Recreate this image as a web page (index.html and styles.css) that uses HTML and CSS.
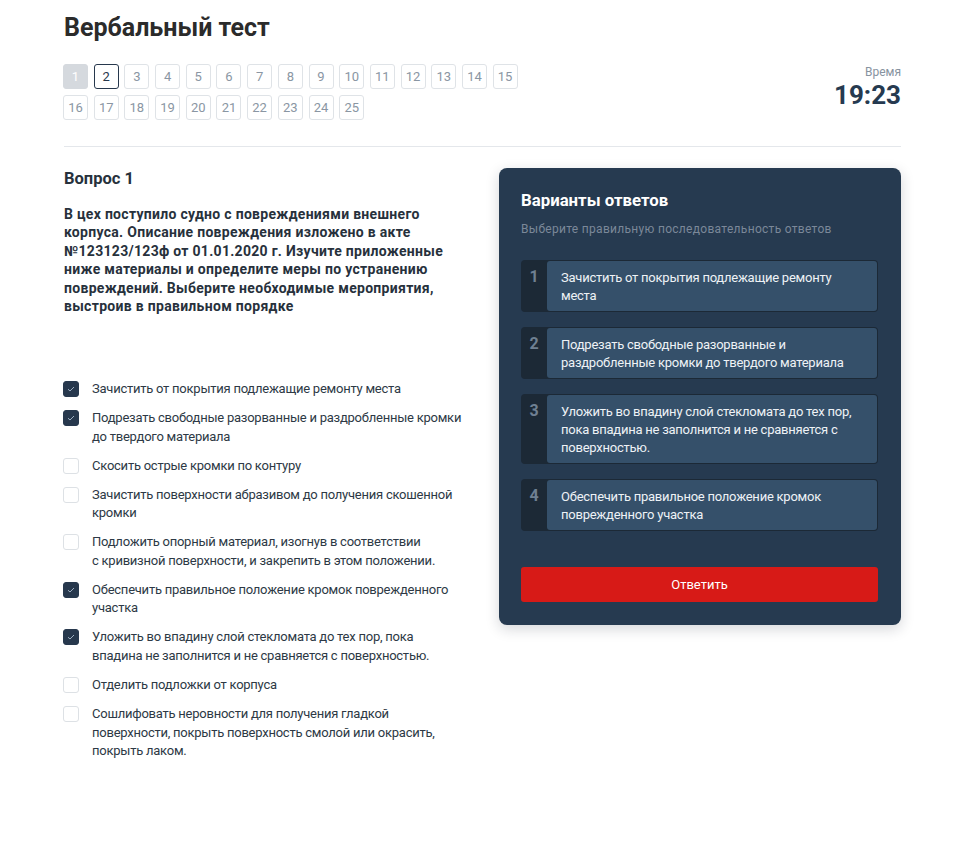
FILE: index.html
```html
<!DOCTYPE html>
<html lang="ru">
<head>
<meta charset="utf-8">
<title>Вербальный тест</title>
<link rel="stylesheet" href="styles.css">
</head>
<body>
<div class="page">
  <header class="header">
    <h1 class="title">Вербальный тест</h1>
    <div class="header-row">
      <div class="pager">
        <span class="pg pg-done">1</span>
        <span class="pg pg-current">2</span>
        <span class="pg">3</span><span class="pg">4</span><span class="pg">5</span><span class="pg">6</span><span class="pg">7</span><span class="pg">8</span><span class="pg">9</span><span class="pg">10</span><span class="pg">11</span><span class="pg">12</span><span class="pg">13</span><span class="pg">14</span><span class="pg">15</span><span class="pg">16</span><span class="pg">17</span><span class="pg">18</span><span class="pg">19</span><span class="pg">20</span><span class="pg">21</span><span class="pg">22</span><span class="pg">23</span><span class="pg">24</span><span class="pg">25</span>
      </div>
      <div class="timer">
        <div class="timer-label">Время</div>
        <div class="timer-value">19:23</div>
      </div>
    </div>
  </header>

  <main class="content">
    <section class="question">
      <h2 class="q-title">Вопрос 1</h2>
      <p class="q-text">В цех поступило судно с повреждениями внешнего корпуса. Описание повреждения изложено в акте №123123/123ф от 01.01.2020 г. Изучите приложенные ниже материалы и определите меры по устранению повреждений. Выберите необходимые мероприятия, выстроив в правильном порядке</p>
      <ul class="options">
        <li class="option"><span class="cb cb-on"><svg viewBox="0 0 16 16" width="16" height="16"><path d="M5 8.2 L7 10 L11 6" fill="none" stroke="#9fb0c2" stroke-width="1"/></svg></span><span class="opt-text">Зачистить от покрытия подлежащие ремонту места</span></li>
        <li class="option"><span class="cb cb-on"><svg viewBox="0 0 16 16" width="16" height="16"><path d="M5 8.2 L7 10 L11 6" fill="none" stroke="#9fb0c2" stroke-width="1"/></svg></span><span class="opt-text">Подрезать свободные разорванные и раздробленные кромки до твердого материала</span></li>
        <li class="option"><span class="cb"></span><span class="opt-text">Скосить острые кромки по контуру</span></li>
        <li class="option"><span class="cb"></span><span class="opt-text">Зачистить поверхности абразивом до получения скошенной кромки</span></li>
        <li class="option"><span class="cb"></span><span class="opt-text">Подложить опорный материал, изогнув в соответствии с&nbsp;кривизной поверхности, и закрепить в этом положении.</span></li>
        <li class="option"><span class="cb cb-on"><svg viewBox="0 0 16 16" width="16" height="16"><path d="M5 8.2 L7 10 L11 6" fill="none" stroke="#9fb0c2" stroke-width="1"/></svg></span><span class="opt-text">Обеспечить правильное положение кромок поврежденного участка</span></li>
        <li class="option"><span class="cb cb-on"><svg viewBox="0 0 16 16" width="16" height="16"><path d="M5 8.2 L7 10 L11 6" fill="none" stroke="#9fb0c2" stroke-width="1"/></svg></span><span class="opt-text">Уложить во впадину слой стекломата до тех пор, пока впадина не заполнится и не сравняется с поверхностью.</span></li>
        <li class="option"><span class="cb"></span><span class="opt-text">Отделить подложки от корпуса</span></li>
        <li class="option"><span class="cb"></span><span class="opt-text">Сошлифовать неровности для получения гладкой поверхности, покрыть поверхность смолой или окрасить, покрыть лаком.</span></li>
      </ul>
    </section>

    <aside class="panel">
      <h3 class="panel-title">Варианты ответов</h3>
      <p class="panel-sub">Выберите правильную последовательность ответов</p>
      <ol class="answers">
        <li class="answer"><span class="ans-num">1</span><span class="ans-text">Зачистить от покрытия подлежащие ремонту места</span></li>
        <li class="answer"><span class="ans-num">2</span><span class="ans-text">Подрезать свободные разорванные и раздробленные кромки до твердого материала</span></li>
        <li class="answer"><span class="ans-num">3</span><span class="ans-text">Уложить во впадину слой стекломата до тех пор, пока впадина не заполнится и не сравняется с поверхностью.</span></li>
        <li class="answer"><span class="ans-num">4</span><span class="ans-text">Обеспечить правильное положение кромок поврежденного участка</span></li>
      </ol>
      <button class="submit" type="button">Ответить</button>
    </aside>
  </main>
</div>
</body>
</html>
```

FILE: styles.css
```css
* { box-sizing: border-box; }

body {
  margin: 0;
  background: #ffffff;
  font-family: Roboto, "Liberation Sans", Arial, sans-serif;
  color: #27313c;
}

.page {
  width: 837px;
  margin-left: 64px;
}

.header {
  padding-bottom: 26px;
  border-bottom: 1px solid #e4e7eb;
}

.title {
  margin: 12px 0 0;
  font-size: 25px;
  line-height: 32px;
  font-weight: 700;
  color: #2b2b2b;
}

.header-row {
  margin-top: 20px;
  display: flex;
  justify-content: space-between;
  align-items: flex-start;
}

.pager {
  width: 460px;
  margin-left: -1px;
  display: flex;
  flex-wrap: wrap;
  column-gap: 5.7px;
  row-gap: 5.5px;
}

.pg {
  width: 25px;
  height: 25px;
  display: flex;
  align-items: center;
  justify-content: center;
  border: 1px solid #dfe3e7;
  border-radius: 3px;
  font-size: 13px;
  color: #8a96a3;
}

.pg-done {
  background: #d5d9de;
  border-color: #d5d9de;
  color: #ffffff;
}

.pg-current {
  border-color: #27384d;
  color: #27384d;
}

.timer {
  text-align: right;
  padding-top: 1px;
}

.timer-label {
  font-size: 12px;
  line-height: 14px;
  color: #8793a0;
}

.timer-value {
  margin-top: 1px;
  font-size: 26px;
  line-height: 30px;
  font-weight: 700;
  color: #263a50;
}

.content {
  margin-top: 21px;
  display: grid;
  grid-template-columns: 400px 1fr;
  column-gap: 35px;
  align-items: start;
}

.question {
  padding-top: 1px;
}

.q-title {
  margin: 0;
  font-size: 16.5px;
  line-height: 20px;
  font-weight: 700;
  color: #27313c;
}

.q-text {
  margin: 16px 0 0;
  font-size: 14px;
  line-height: 18.6px;
  font-weight: 700;
  letter-spacing: 0.3px;
  color: #27313c;
}

.options {
  list-style: none;
  margin: 64px 0 0;
  padding: 0;
  display: flex;
  flex-direction: column;
  gap: 10.4px;
}

.option {
  display: flex;
  align-items: flex-start;
  gap: 13px;
  font-size: 13px;
  line-height: 18.6px;
  letter-spacing: -0.24px;
  color: #2d3945;
}

.cb {
  flex: none;
  width: 16px;
  height: 16px;
  margin-top: 1px;
  margin-left: -1px;
  border: 1px solid #dde1e5;
  border-radius: 3px;
  background: #ffffff;
  display: block;
}

.cb svg { display: block; margin: -1px; }

.cb-on {
  background: #27384d;
  border-color: #27384d;
}

.opt-text { flex: 1; }

.panel {
  background: #263a50;
  border-radius: 8px;
  box-shadow: 0 4px 14px rgba(20, 30, 45, 0.18);
  padding: 22px 23px 23px 22px;
  color: #ffffff;
}

.panel-title {
  margin: 0;
  font-size: 16.8px;
  line-height: 20px;
  font-weight: 700;
  color: #ffffff;
}

.panel-sub {
  margin: 11px 0 0;
  font-size: 12px;
  line-height: 16px;
  letter-spacing: 0.3px;
  color: #7b8899;
}

.answers {
  list-style: none;
  margin: 23px 0 0;
  padding: 0;
  display: flex;
  flex-direction: column;
  gap: 15px;
}

.answer {
  display: flex;
  background: #1c2936;
  border-radius: 4px;
  padding: 1px 1px 1px 0;
}

.ans-num {
  flex: none;
  width: 26px;
  padding-top: 7px;
  text-align: center;
  font-size: 16px;
  line-height: 18px;
  font-weight: 700;
  color: #6f8092;
}

.ans-text {
  flex: 1;
  background: #35506a;
  border-radius: 3px;
  padding: 8px 14px 6px;
  font-size: 13px;
  line-height: 18px;
  letter-spacing: -0.24px;
  color: #eef2f6;
}

.submit {
  display: block;
  width: 100%;
  height: 35px;
  margin-top: 36px;
  border: 0;
  border-radius: 3px;
  background: #d71a17;
  color: #ffffff;
  font-family: Roboto, "Liberation Sans", Arial, sans-serif;
  font-size: 13px;
  cursor: pointer;
}
```
